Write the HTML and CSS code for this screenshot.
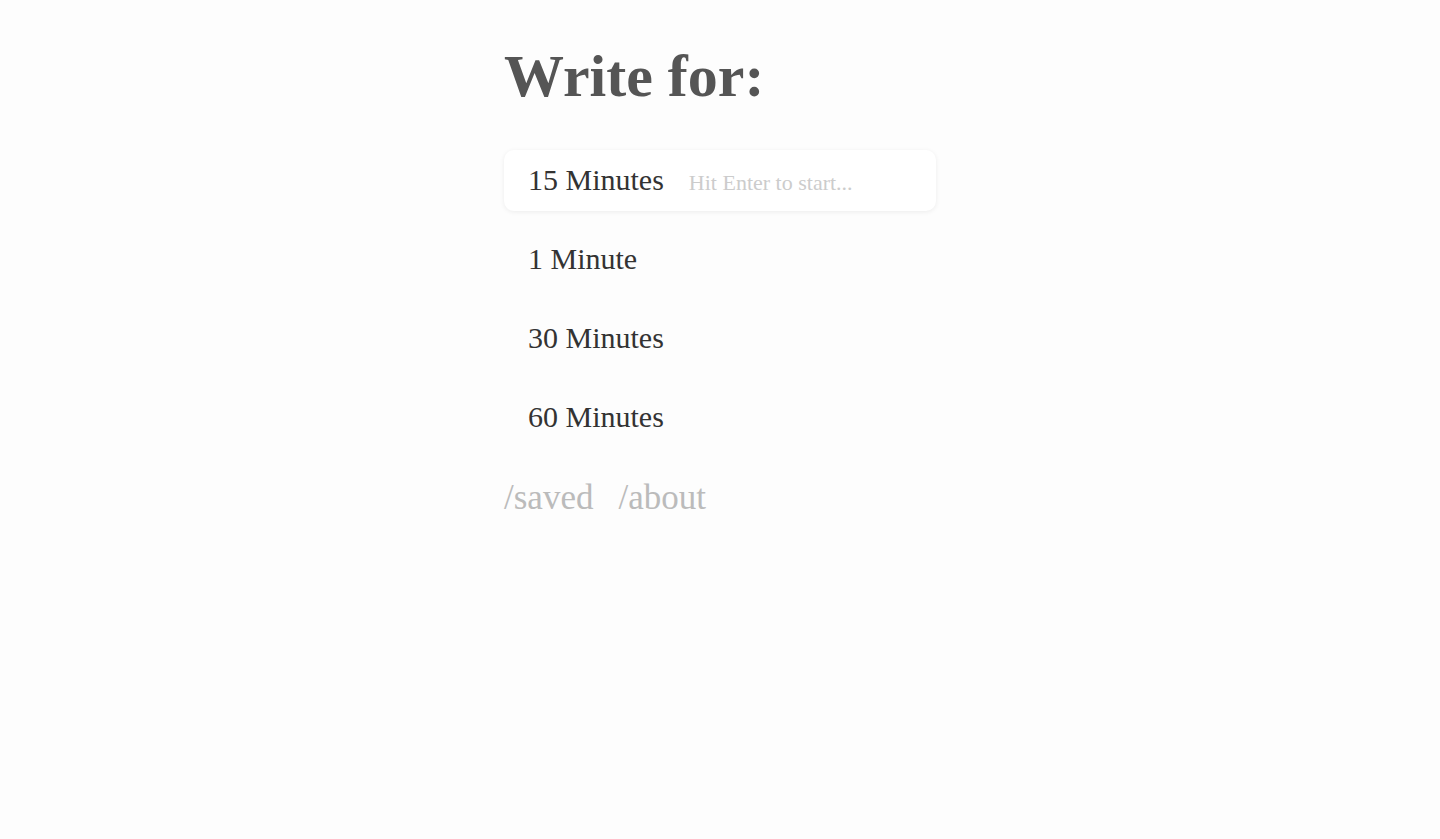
FILE: index.html
```html
<!DOCTYPE html>
<html lang="en">
<head>
<meta charset="utf-8">
<title>Write for</title>
<link rel="stylesheet" href="styles.css">
</head>
<body>
<main class="page">
  <h1 class="title">Write for:</h1>
  <ul class="options">
    <li class="option option--active"><span class="option-label">15 Minutes</span><span class="option-hint">Hit Enter to start...</span></li>
    <li class="option"><span class="option-label">1 Minute</span></li>
    <li class="option"><span class="option-label">30 Minutes</span></li>
    <li class="option"><span class="option-label">60 Minutes</span></li>
  </ul>
  <nav class="links">
    <a class="link" href="#">/saved</a>
    <a class="link" href="#">/about</a>
  </nav>
</main>
</body>
</html>
```
FILE: styles.css
```css
html, body {
  margin: 0;
  padding: 0;
  background: #fdfdfd;
}
body {
  font-family: "Liberation Serif", "DejaVu Serif", serif;
  color: #333;
}
.page {
  width: 432px;
  margin: 0 auto;
  padding-top: 46px;
}
.title {
  margin: 0;
  font-size: 60px;
  line-height: 61px;
  font-weight: 700;
  color: #555;
}
.options {
  list-style: none;
  margin: 43px 0 0;
  padding: 0;
  display: flex;
  flex-direction: column;
  gap: 18px;
}
.option {
  height: 61px;
  box-sizing: border-box;
  padding: 0 24px;
  display: flex;
  align-items: baseline;
  gap: 25px;
  line-height: 60px;
  border-radius: 10px;
}
.option--active {
  background: #fff;
  box-shadow: 0 1px 5px rgba(0, 0, 0, 0.07);
}
.option-label {
  font-size: 30px;
  color: #333;
}
.option-hint {
  font-size: 22px;
  color: #ccc;
}
.links {
  margin-top: 29px;
  display: flex;
  gap: 25px;
}
.link {
  font-size: 35px;
  line-height: 42px;
  color: #bbb;
  text-decoration: none;
}
```
